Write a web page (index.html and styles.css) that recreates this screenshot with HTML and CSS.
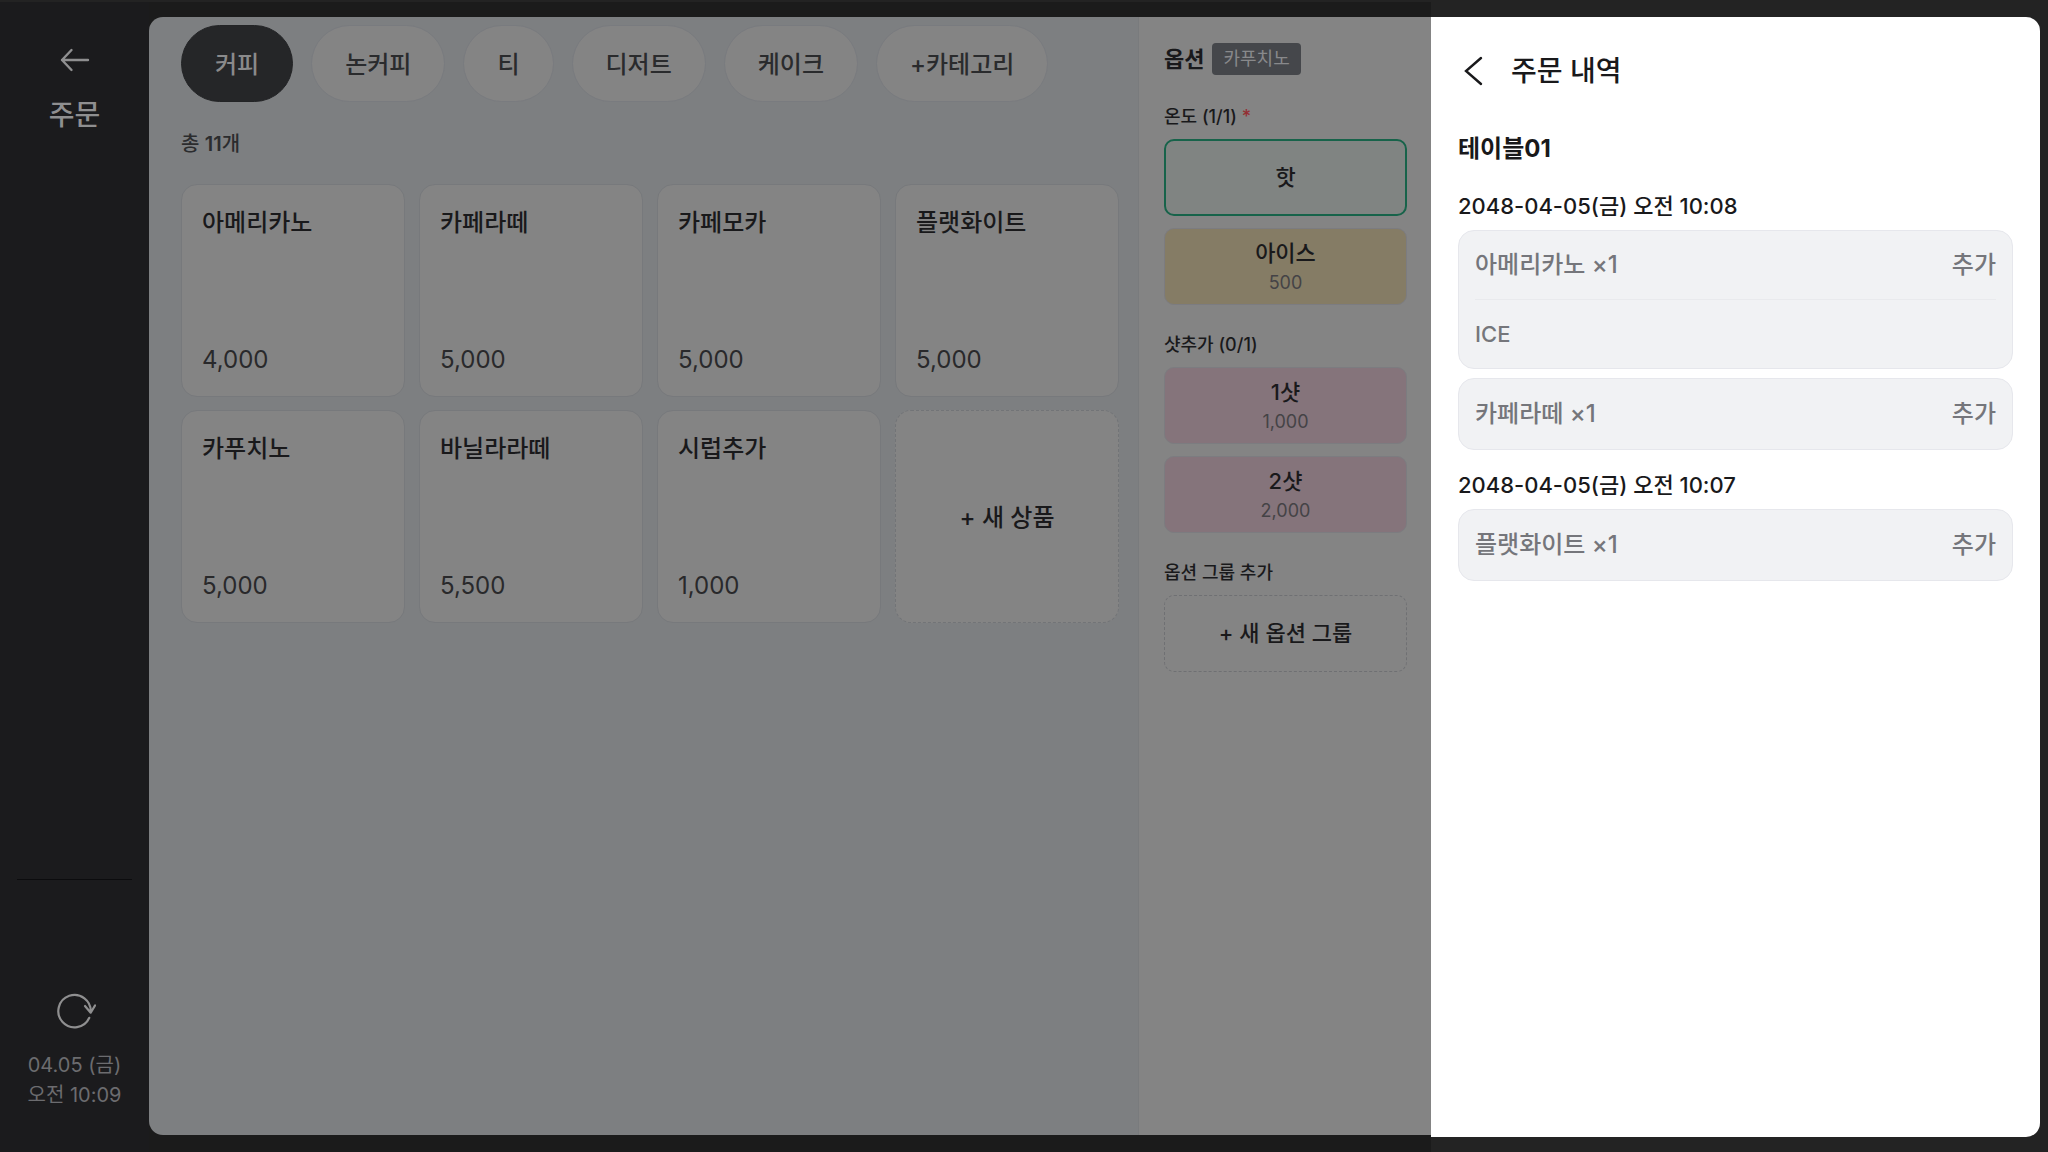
FILE: index.html
```html
<!DOCTYPE html>
<html lang="ko">
<head>
<meta charset="utf-8">
<meta name="viewport" content="width=device-width, initial-scale=1">
<title>주문 내역</title>
<link rel="stylesheet" href="styles.css">
</head>
<body>
<div class="app">
  <div class="backdrop">
    <nav class="sidebar">
      <button class="icon-button" type="button" aria-label="뒤로">
        <svg width="32" height="26" viewBox="0 0 32 26" fill="none" stroke="currentColor" stroke-width="2.4" stroke-linecap="round" stroke-linejoin="round"><path d="M29 13H3M12.500 3L3 13l9.500 10"/></svg>
      </button>
      <h1 class="sidebar-title">주문</h1>
      <div class="sidebar-foot">
        <button class="icon-button" type="button" aria-label="새로고침">
          <svg width="42" height="38" viewBox="0 0 42 38" fill="none" stroke="currentColor" stroke-width="2.2" stroke-linecap="round" stroke-linejoin="round"><path d="M35.300 25.800A16.200 16.200 0 1 1 36.700 20.300M31 14l5.700 6.700 4.400-7.300"/></svg>
        </button>
        <p class="clock">04.05 (금)<br>오전 10:09</p>
      </div>
    </nav>
    <div class="workspace">
      <main class="catalog">
        <div class="categories">
          <button class="pill pill-active" type="button">커피</button>
          <button class="pill" type="button">논커피</button>
          <button class="pill" type="button">티</button>
          <button class="pill" type="button">디저트</button>
          <button class="pill" type="button">케이크</button>
          <button class="pill" type="button">+카테고리</button>
        </div>
        <p class="count">총 <b>11</b>개</p>
        <div class="products">
          <button class="product" type="button"><span>아메리카노</span><span class="price">4,000</span></button>
          <button class="product" type="button"><span>카페라떼</span><span class="price">5,000</span></button>
          <button class="product" type="button"><span>카페모카</span><span class="price">5,000</span></button>
          <button class="product" type="button"><span>플랫화이트</span><span class="price">5,000</span></button>
          <button class="product" type="button"><span>카푸치노</span><span class="price">5,000</span></button>
          <button class="product" type="button"><span>바닐라라떼</span><span class="price">5,500</span></button>
          <button class="product" type="button"><span>시럽추가</span><span class="price">1,000</span></button>
          <button class="product product-new" type="button">+ 새 상품</button>
        </div>
      </main>
      <aside class="options">
        <header class="options-head">
          <h2 class="options-title">옵션</h2>
          <span class="tag">카푸치노</span>
        </header>
        <section class="group">
          <h3 class="group-title">온도 (1/1) <span class="required">*</span></h3>
          <button class="option option-selected" type="button">핫</button>
          <button class="option option-yellow" type="button">아이스<span class="option-price">500</span></button>
        </section>
        <section class="group">
          <h3 class="group-title">샷추가 (0/1)</h3>
          <button class="option option-pink" type="button">1샷<span class="option-price">1,000</span></button>
          <button class="option option-pink" type="button">2샷<span class="option-price">2,000</span></button>
        </section>
        <section class="group">
          <h3 class="group-title">옵션 그룹 추가</h3>
          <button class="option option-new" type="button">+ 새 옵션 그룹</button>
        </section>
      </aside>
    </div>
  </div>
  <section class="drawer">
    <header class="drawer-head">
      <button class="icon-button" type="button" aria-label="닫기">
        <svg width="24" height="32" viewBox="0 0 24 32" fill="none" stroke="currentColor" stroke-width="2.4" stroke-linecap="round" stroke-linejoin="miter"><path d="M19 3L4 16l15 13"/></svg>
      </button>
      <h2 class="drawer-title">주문 내역</h2>
    </header>
    <h3 class="table-name">테이블01</h3>
    <section class="order">
      <h4 class="order-time">2048-04-05(금) 오전 10:08</h4>
      <div class="order-card">
        <div class="order-row"><span>아메리카노 ×1</span><span>추가</span></div>
        <div class="order-row order-extra">ICE</div>
      </div>
      <div class="order-card">
        <div class="order-row"><span>카페라떼 ×1</span><span>추가</span></div>
      </div>
    </section>
    <section class="order">
      <h4 class="order-time">2048-04-05(금) 오전 10:07</h4>
      <div class="order-card">
        <div class="order-row"><span>플랫화이트 ×1</span><span>추가</span></div>
      </div>
    </section>
  </section>
</div>
</body>
</html>
```
FILE: styles.css
```css
* { box-sizing: border-box; }

body {
  margin: 0;
  background: #232323;
  font-family: Inter, "Noto Sans CJK KR", sans-serif;
  font-weight: 500;
}

h1, h2, h3, h4, p { margin: 0; font-weight: 500; }

button {
  font: inherit;
  color: inherit;
  margin: 0;
  padding: 0;
  border: 0;
  background: none;
  cursor: pointer;
}

svg { display: block; }

.app {
  display: flex;
  min-height: 100vh;
  padding: 2px 8px 0 0;
}

/* dimmed area behind the drawer */
.backdrop {
  flex: 1;
  min-width: 0;
  display: flex;
  background: #1b1b1b;
}

.sidebar {
  flex: 0 0 149px;
  display: flex;
  flex-direction: column;
  align-items: center;
  padding: 45px 17px 42px;
  background: #1b1b1d;
  color: #8f8f90;
}

.sidebar-title {
  margin-top: 22px;
  font-size: 28px;
  line-height: 40px;
}

.sidebar-foot {
  align-self: stretch;
  display: flex;
  flex-direction: column;
  align-items: center;
  margin-top: auto;
  padding-top: 112px;
  border-top: 1px solid #0c0c0e;
}

.clock {
  margin-top: 20px;
  color: #6c6c6f;
  font-size: 20px;
  font-weight: 400;
  line-height: 30px;
  text-align: center;
}

.workspace {
  flex: 1;
  min-width: 0;
  display: flex;
  margin: 15px 0 17px;
  border-radius: 14px 0 0 14px;
  overflow: hidden;
}

.catalog {
  flex: 1;
  min-width: 0;
  padding: 8px 19px 32px 32px;
  background: #7d7f81;
}

.categories { display: flex; flex-wrap: wrap; gap: 18px; }

.pill {
  height: 77px;
  padding: 0 33px 2px;
  border: 1px solid #797b7f;
  border-radius: 39px;
  background: #848484;
  color: #2a2b2d;
  font-size: 24px;
}

.pill-active {
  border-color: #232426;
  background: #252628;
  color: #8a8a8b;
}

.count {
  margin: 27px 0 25px;
  color: #2b2c2e;
  font-size: 20px;
  line-height: 30px;
}

.count b { font-weight: 600; }

.products {
  display: grid;
  grid-template-columns: repeat(4, 1fr);
  gap: 13px 14px;
}

.product {
  display: flex;
  flex-direction: column;
  justify-content: space-between;
  align-items: flex-start;
  height: 213px;
  padding: 20px 20px 18px;
  border: 1px solid #77797c;
  border-radius: 16px;
  background: #848484;
  color: #19191b;
  font-size: 24px;
  line-height: 36px;
}

.price { color: #29292b; font-weight: 400; }

.product-new {
  justify-content: center;
  align-items: center;
  border: 1px dashed #727477;
}

.options {
  flex: 0 0 293px;
  padding: 26px 24px 26px 25px;
  border-left: 1px solid #797b7d;
  background: #848484;
  color: #19191b;
}

.options-head {
  display: flex;
  align-items: center;
  gap: 8px;
  margin-bottom: 30px;
}

.options-title {
  font-size: 22px;
  font-weight: 700;
  line-height: 32px;
}

.tag {
  padding: 0 11px;
  border-radius: 4px;
  background: #45474b;
  color: #88898b;
  font-size: 18px;
  font-weight: 400;
  line-height: 32px;
}

.group {
  display: flex;
  flex-direction: column;
  gap: 12px;
  margin-bottom: 28px;
}

.group-title {
  margin-bottom: -2px;
  font-size: 18px;
  line-height: 24px;
}

.required { color: #942e33; }

.option {
  display: flex;
  flex-direction: column;
  justify-content: center;
  align-items: center;
  gap: 2px;
  height: 77px;
  padding-bottom: 2px;
  border: 1px solid #7c7c80;
  border-radius: 10px;
  font-size: 22px;
  line-height: 32px;
}

.option-price {
  color: #444346;
  font-size: 18px;
  font-weight: 400;
  line-height: 24px;
}

.option-selected {
  border: 2px solid #17634a;
  background: #808482;
}

.option-yellow { background: #857c65; }

.option-pink { background: #85747b; }

.option-new { border: 1px dashed #6f7073; }

.drawer {
  flex: 0 0 609px;
  margin: 15px 0;
  padding: 34px 27px;
  border-radius: 0 14px 14px 0;
  background: #fff;
  color: #19191b;
}

.drawer-head { display: flex; align-items: center; gap: 25px; padding-left: 4px; }

.drawer-title { font-size: 28px; line-height: 40px; }

.table-name {
  margin: 40px 0 24px;
  font-size: 24px;
  font-weight: 700;
  line-height: 36px;
}

.order {
  display: flex;
  flex-direction: column;
  gap: 9px;
  margin-bottom: 20px;
}

.order-time { font-size: 22px; line-height: 30px; }

.order-card {
  display: flex;
  flex-direction: column;
  justify-content: center;
  min-height: 72px;
  padding: 0 16px;
  border: 1px solid #e6e7ec;
  border-radius: 16px;
  background: #f1f2f4;
  color: #75767b;
  font-size: 24px;
}

.order-row {
  display: flex;
  justify-content: space-between;
  padding: 16px 0;
  line-height: 36px;
}

.order-extra {
  border-top: 1px solid #e9eaed;
  font-size: 22px;
}
```
